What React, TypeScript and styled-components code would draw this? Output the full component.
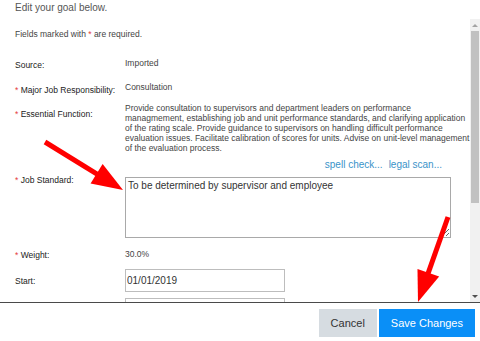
import React from "react";
import styled, { createGlobalStyle } from "styled-components";

const GlobalStyle = createGlobalStyle`
  html, body {
    margin: 0;
    padding: 0;
    background: #fff;
  }
  body {
    font-family: "Liberation Sans", Arial, sans-serif;
  }
`;

const FONT = `"Liberation Sans", Arial, sans-serif`;

const Page = styled.div`
  position: relative;
  width: 480px;
  height: 341px;
  overflow: hidden;
  display: flex;
  flex-direction: column;
  background: #fff;
  font-family: ${FONT};
`;

const Header = styled.div`
  height: 19px;
  padding: 1px 15px 0;
  box-sizing: border-box;
  font-size: 10px;
  line-height: 13px;
  color: #555;
`;

const ScrollArea = styled.div`
  display: flex;
  height: 283px;
`;

const Content = styled.div`
  flex: 1;
  overflow: hidden;
  padding-left: 15px;
  font-size: 8.5px;
  line-height: 10px;
  color: #333;
`;

const Note = styled.div`
  margin-top: 10px;
  color: #444;
`;

const Req = styled.span`
  color: #e43b3b;
`;

const Row = styled.div<{ $mt: number }>`
  display: grid;
  grid-template-columns: 110px 1fr;
  margin-top: ${(p) => p.$mt}px;
`;

const Label = styled.div<{ $pt?: number }>`
  padding-top: ${(p) => p.$pt ?? 0}px;
  color: #222;
`;

const Value = styled.div`
  color: #444;
  white-space: nowrap;
`;

const Links = styled.div<{ $mt: number }>`
  margin: ${(p) => p.$mt}px 0 0 110px;
  width: 326px;
  padding-right: 9px;
  box-sizing: border-box;
  font-size: 10px;
  line-height: 12px;
  display: flex;
  justify-content: flex-end;
  gap: 6px;
`;

const LinkText = styled.a`
  color: #3a93c9;
  text-decoration: none;
`;

const TextArea = styled.textarea`
  display: block;
  margin-top: 2px;
  width: 326px;
  height: 61px;
  box-sizing: border-box;
  border: 1px solid #a9a9a9;
  padding: 2px 2px;
  font-family: ${FONT};
  font-size: 10px;
  line-height: 12px;
  color: #333;
  resize: both;
  outline: none;
`;

const DateInput = styled.input`
  display: block;
  width: 160px;
  height: 23px;
  box-sizing: border-box;
  border: 1px solid #bdbdbd;
  padding: 0 1px;
  font-family: ${FONT};
  font-size: 10px;
  color: #333;
  outline: none;
`;

const ScrollBar = styled.div`
  width: 10px;
  background: #f1f1f1;
  display: flex;
  flex-direction: column;
`;

const ScrollButton = styled.div<{ $down?: boolean }>`
  height: 12px;
  display: flex;
  align-items: center;
  justify-content: center;
  margin-top: ${(p) => (p.$down ? "auto" : "0")};

  &::after {
    content: "";
    width: 0;
    height: 0;
    border-left: 3px solid transparent;
    border-right: 3px solid transparent;
    ${(p) =>
      p.$down
        ? "border-top: 3px solid #505050;"
        : "border-bottom: 3px solid #a3a3a3;"}
  }
`;

const Thumb = styled.div`
  height: 172px;
  margin: 0 1px;
  background: #c1c1c1;
`;

const Footer = styled.div`
  flex: 1;
  border-top: 1px solid #4a4a4a;
  display: flex;
  justify-content: flex-end;
  align-items: flex-start;
  gap: 2px;
  padding: 6px 5px 0 0;
`;

const Button = styled.button<{ $primary?: boolean }>`
  height: 28px;
  border: none;
  border-radius: 0;
  padding: 0 12px;
  font-family: ${FONT};
  font-size: 11px;
  background: ${(p) => (p.$primary ? "#0a8ff7" : "#d6dce1")};
  color: ${(p) => (p.$primary ? "#fff" : "#333")};
`;

const Arrows = styled.svg`
  position: absolute;
  left: 0;
  top: 0;
  pointer-events: none;
`;

const Arrow: React.FC<{ x1: number; y1: number; x2: number; y2: number }> = ({ x1, y1, x2, y2 }) => {
  const dx = x2 - x1;
  const dy = y2 - y1;
  const len = Math.hypot(dx, dy);
  const ux = dx / len;
  const uy = dy / len;
  const headLen = 31;
  const half = 11.5;
  const bx = x2 - ux * headLen;
  const by = y2 - uy * headLen;
  const w1 = `${bx - uy * half},${by + ux * half}`;
  const w2 = `${bx + uy * half},${by - ux * half}`;
  return (
    <g fill="#ff0000" stroke="none">
      <line x1={x1} y1={y1} x2={bx + ux * 2} y2={by + uy * 2} stroke="#ff0000" strokeWidth={5} />
      <polygon points={`${x2},${y2} ${w1} ${w2}`} />
    </g>
  );
};

const App: React.FC = () => {
  return (
    <Page>
      <GlobalStyle />
      <Header>Edit your goal below.</Header>
      <ScrollArea>
        <Content>
          <Note>
            Fields marked with <Req>*</Req> are required.
          </Note>
          <Row $mt={19}>
            <Label $pt={2}>Source:</Label>
            <Value>Imported</Value>
          </Row>
          <Row $mt={12}>
            <Label $pt={3}>
              <Req>*</Req> Major Job Responsibility:
            </Label>
            <Value>Consultation</Value>
          </Row>
          <Row $mt={8}>
            <Label $pt={6}>
              <Req>*</Req> Essential Function:
            </Label>
            <Value>
              Provide consultation to supervisors and department leaders on performance
              <br />
              managmement, establishing job and unit performance standards, and clarifying application
              <br />
              of the rating scale. Provide guidance to supervisors on handling difficult performance
              <br />
              evaluation issues. Facilitate calibration of scores for units. Advise on unit-level management
              <br />
              of the evaluation process.
            </Value>
          </Row>
          <Links $mt={6}>
            <LinkText href="#">spell check...</LinkText>
            <LinkText href="#">legal scan...</LinkText>
          </Links>
          <Row $mt={4}>
            <Label>
              <Req>*</Req> Job Standard:
            </Label>
            <div>
              <TextArea defaultValue="To be determined by supervisor and employee" />
            </div>
          </Row>
          <Row $mt={11}>
            <Label $pt={1}>
              <Req>*</Req> Weight:
            </Label>
            <Value>30.0%</Value>
          </Row>
          <Row $mt={9}>
            <Label $pt={7}>Start:</Label>
            <DateInput defaultValue="01/01/2019" />
          </Row>
          <Row $mt={6}>
            <Label />
            <DateInput defaultValue="" />
          </Row>
        </Content>
        <ScrollBar>
          <ScrollButton />
          <Thumb />
          <ScrollButton $down />
        </ScrollBar>
      </ScrollArea>
      <Footer>
        <Button>Cancel</Button>
        <Button $primary>Save Changes</Button>
      </Footer>
      <Arrows width={480} height={341} viewBox="0 0 480 341">
        <Arrow x1={45} y1={142} x2={123} y2={190} />
        <Arrow x1={448} y1={217} x2={418} y2={302} />
      </Arrows>
    </Page>
  );
};

export default App;
